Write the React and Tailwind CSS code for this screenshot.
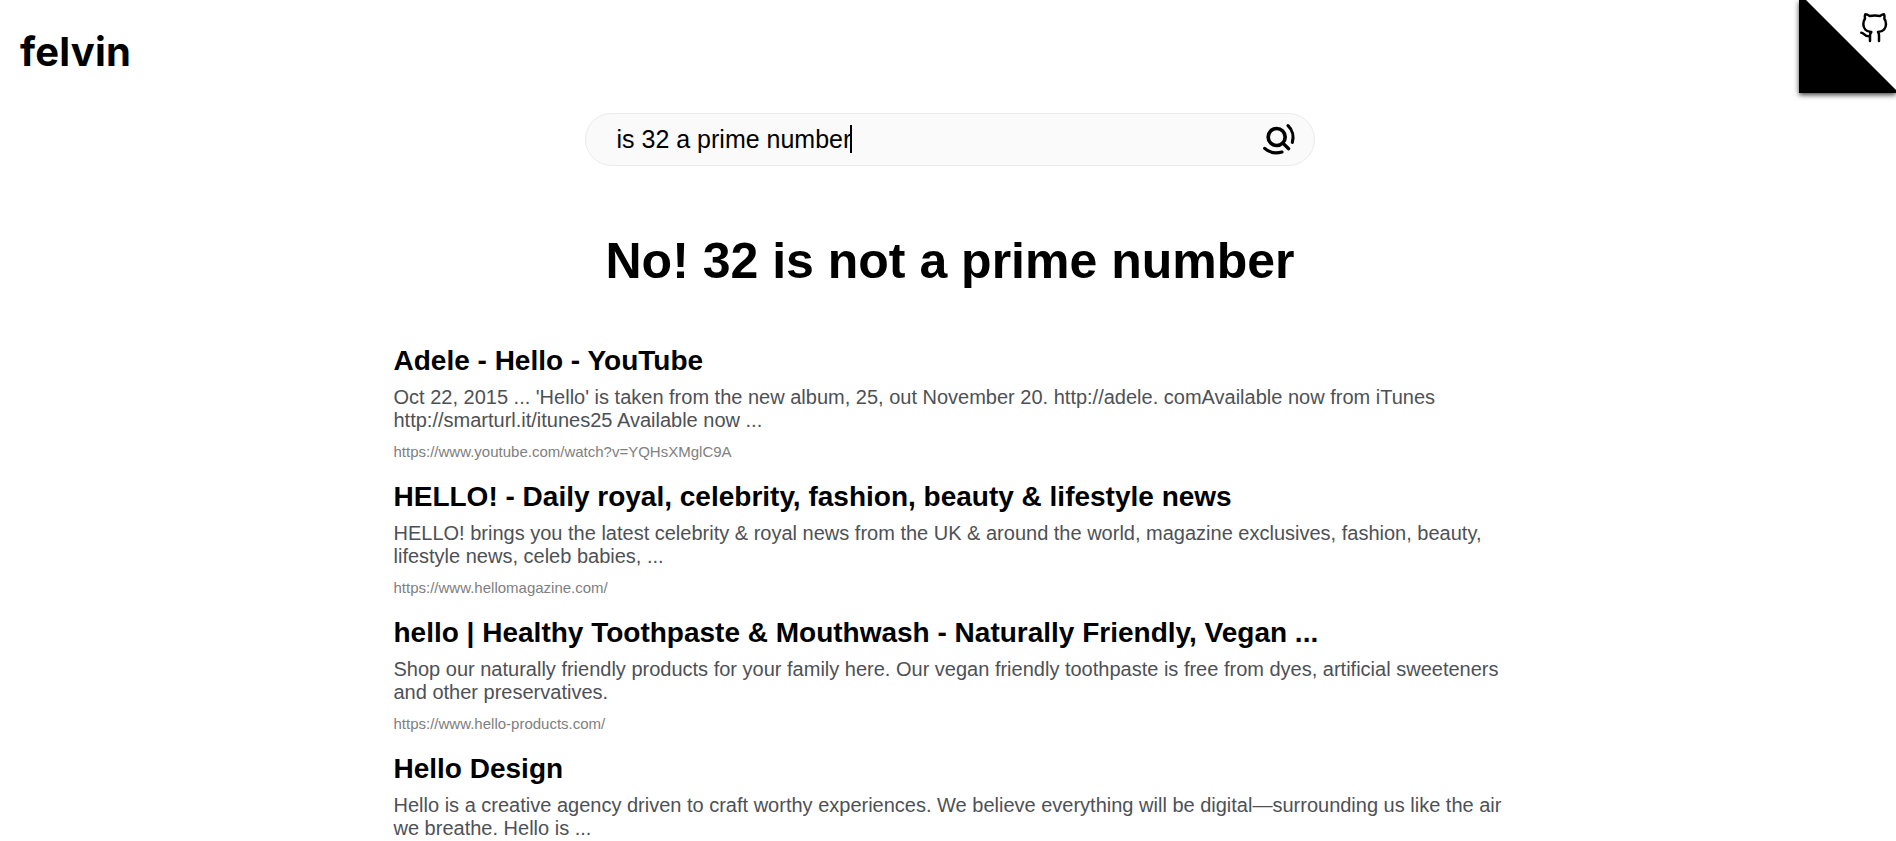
const results = [
  {
    title: "Adele - Hello - YouTube",
    text: ["Oct 22, 2015 ... 'Hello' is taken from the new album, 25, out November 20. http://adele. comAvailable now from iTunes", "http://smarturl.it/itunes25 Available now ..."],
    url: "https://www.youtube.com/watch?v=YQHsXMglC9A",
  },
  {
    title: "HELLO! - Daily royal, celebrity, fashion, beauty & lifestyle news",
    text: ["HELLO! brings you the latest celebrity & royal news from the UK & around the world, magazine exclusives, fashion, beauty,", "lifestyle news, celeb babies, ..."],
    url: "https://www.hellomagazine.com/",
  },
  {
    title: "hello | Healthy Toothpaste & Mouthwash - Naturally Friendly, Vegan ...",
    text: ["Shop our naturally friendly products for your family here. Our vegan friendly toothpaste is free from dyes, artificial sweeteners", "and other preservatives."],
    url: "https://www.hello-products.com/",
  },
  {
    title: "Hello Design",
    text: ["Hello is a creative agency driven to craft worthy experiences. We believe everything will be digital—surrounding us like the air", "we breathe. Hello is ..."],
  },
];

function SearchIcon() {
  return (
    <svg className="mt-px h-11 w-11" viewBox="0 0 132 132" fill="none" stroke="#000" strokeLinecap="round">
      <circle cx="56" cy="57" r="25.500" strokeWidth="11" />
      <path strokeWidth="10" d="M75 76 92 92" />
      <path strokeWidth="9.5" d="M90 23C104 36 108 56 103 73" />
      <path strokeWidth="9.5" d="M20 91C34 104 54 107 72 102" />
    </svg>
  );
}

function GithubCorner() {
  return (
    <a href="#github" className="block h-[93px] w-[97px] bg-black shadow-[0_2px_5px_rgba(0,0,0,0.75)]">
      <svg className="block h-[93px] w-[97px]" viewBox="0 0 97 93" fill="none">
        <path d="M7 0H97V90Z" fill="#fff" />
        <g transform="translate(51 2) scale(0.3333)" stroke="#000" strokeWidth="7.5" strokeLinecap="round" strokeLinejoin="round">
          <path d="M60 117V100Q60 94 64 90C47 89 40 78 40 66Q40 56 45 50Q43 43 46 37Q52 37 59 42Q74 39 90 42Q97 37 102 37Q105 43 103 50Q108 56 108 66C108 78 101 89 84 90Q87 94 87 100V117" />
          <path d="M34 92C42 92 43 104 58 103" />
        </g>
      </svg>
    </a>
  );
}

export default function App() {
  return (
    <div className="h-[841px] overflow-hidden bg-white font-['Liberation_Sans',Arial,sans-serif] text-black">
      <header className="flex h-[113px] items-start justify-between">
        <div className="pt-7 pl-5 font-['Inter',sans-serif] text-[40px] leading-[48px] font-bold tracking-[0.2px]">felvin</div>
        <GithubCorner />
      </header>
      <main>
        <div className="ml-[585px] flex h-[53px] w-[730px] items-center justify-between rounded-full border border-[#ebebeb] bg-[#fafafa] pr-3 pl-[30px]">
          <div className="flex items-center pb-0.5">
            <span className="pl-[0.5px] text-[25px] leading-7">is 32 a prime number</span>
            <span className="-ml-px h-7 w-0.5 bg-black" />
          </div>
          <SearchIcon />
        </div>
        <h1 className="mt-[66px] ml-[605.5px] text-[50px] leading-[58px] font-bold">No! 32 is not a prime number</h1>
        <div className="mt-[55px] ml-[393.5px]">
          {results.map((r) => (
            <article key={r.title} className="h-[136px] whitespace-nowrap">
              <h2 className="text-[28px] leading-8 font-bold">{r.title}</h2>
              <div className="mt-[9px] text-[20px] leading-[23px] text-[#4d5156]">
                {r.text.map((line) => (
                  <p key={line}>{line}</p>
                ))}
              </div>
              {r.url && <p className="mt-[11px] text-[15px] leading-[17px] text-[#808080]">{r.url}</p>}
            </article>
          ))}
        </div>
      </main>
    </div>
  );
}
